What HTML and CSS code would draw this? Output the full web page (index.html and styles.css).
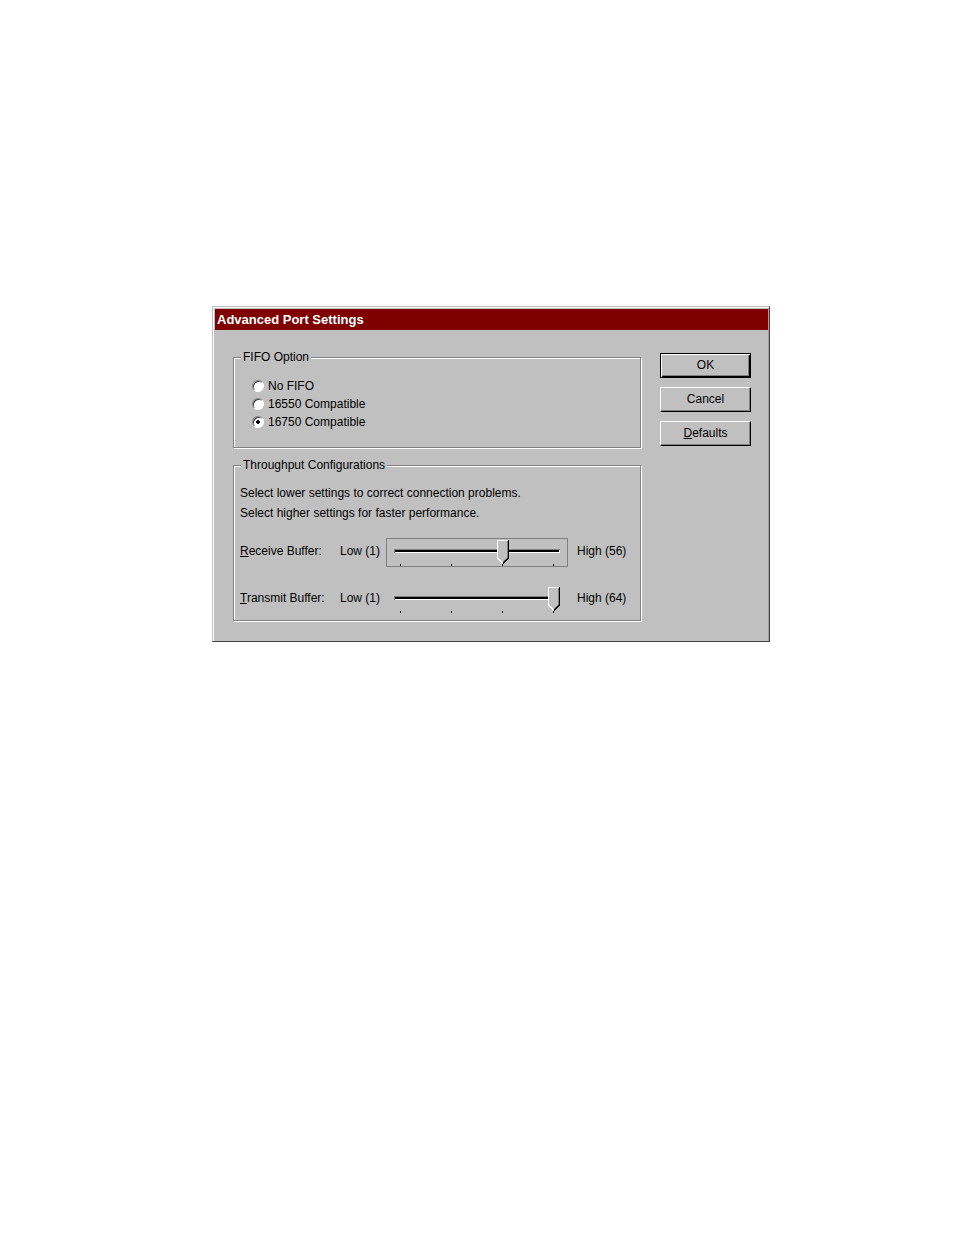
FILE: index.html
```html
<!DOCTYPE html>
<html lang="en">
<head>
  <meta charset="UTF-8">
  <meta name="viewport" content="width=device-width, initial-scale=1.0">
  <title>Advanced Port Settings</title>
  <link rel="stylesheet" href="styles.css">
</head>
<body>

  <form class="dialog" onsubmit="return false">
    <h1 class="title-bar">Advanced Port Settings</h1>

    <div class="dialog-body">
      <div class="settings">
        <fieldset class="fifo">
          <legend>FIFO Option</legend>
          <label class="option"><input type="radio" name="fifo"> No FIFO</label>
          <label class="option"><input type="radio" name="fifo"> 16550 Compatible</label>
          <label class="option"><input type="radio" name="fifo" checked> 16750 Compatible</label>
        </fieldset>

        <fieldset class="throughput">
          <legend>Throughput Configurations</legend>
          <p>Select lower settings to correct connection problems.</p>
          <p>Select higher settings for faster performance.</p>

          <div class="buffers">
            <label for="receive"><u>R</u>eceive Buffer:</label>
            <span>Low (1)</span>
            <div class="slider focused">
              <input type="range" id="receive" min="0" max="3" value="2" accesskey="r">
              <div class="ticks"><i></i><i></i><i></i><i></i></div>
            </div>
            <span class="high">High (56)</span>

            <label for="transmit"><u>T</u>ransmit Buffer:</label>
            <span>Low (1)</span>
            <div class="slider">
              <input type="range" id="transmit" min="0" max="3" value="3" accesskey="t">
              <div class="ticks"><i></i><i></i><i></i><i></i></div>
            </div>
            <span class="high">High (64)</span>
          </div>
        </fieldset>
      </div>

      <div class="buttons">
        <button type="submit" class="default">OK</button>
        <button type="button">Cancel</button>
        <button type="button" accesskey="d"><u>D</u>efaults</button>
      </div>
    </div>
  </form>

</body>
</html>
```

FILE: styles.css
```css
body {
  margin: 0;
  padding: 306px 184px 24px 212px;
  background-color: #fff;
  color: #000;
  font-family: "Liberation Sans", Arial, sans-serif;
  font-size: 12px;
}

.dialog {
  background-color: #c0c0c0;
  border: 1px solid;
  border-color: #c0c0c0 #404040 #404040 #c0c0c0;
  box-shadow: inset 1px 1px #fff, inset -1px 0 #a0a0a0;
  padding: 2px 1px 0 2px;
}

.title-bar {
  margin: 0;
  padding: 0 2px;
  background-color: #800000;
  color: #fff;
  font-size: 13px;
  line-height: 21px;
}

.dialog-body {
  display: flex;
  gap: 19px;
  padding: 20px 17px 20px 18px;
}

.settings {
  flex: 1;
  display: flex;
  flex-direction: column;
  gap: 10px;
}

fieldset {
  min-width: 0;
  margin: 0;
  border: 1px solid #808080;
  box-shadow: inset 1px 1px #fff, 1px 1px #fff;
}

legend {
  margin-left: 1px;
  padding: 0 2px;
  background-color: #c0c0c0;
  line-height: 14px;
}

/* FIFO Option */
.fifo {
  padding: 13px 6px 16px;
}

.option {
  display: flex;
  align-items: center;
  gap: 4px;
  margin-left: 12px;
  line-height: 18px;
}

.option input {
  appearance: none;
  width: 12px;
  height: 12px;
  margin: 0;
  border: 1px solid;
  border-color: #808080 #fff #fff #808080;
  border-radius: 50%;
  background-color: #fff;
  box-shadow: inset 1px 1px #404040;
}

.option input:checked {
  background-image: radial-gradient(circle, #000 2px, transparent 2px);
}

/* Throughput Configurations */
.throughput {
  padding: 11px 0 6px 6px;
}

.throughput p {
  margin: 0;
  line-height: 20px;
}

.buffers {
  display: grid;
  grid-template-columns: 100px 46px 1fr 72px;
  row-gap: 18px;
  margin-top: 15px;
  line-height: 26px;
}

.high {
  padding-left: 9px;
}

.slider {
  border: 1px solid transparent;
  padding: 1px 7px 0;
}

.slider.focused {
  border-color: #808080;
}

.slider input {
  appearance: none;
  display: block;
  width: 100%;
  height: 22px;
  margin: 0;
  background: none;
  outline: none;
}

.slider input::-webkit-slider-runnable-track {
  height: 4px;
  background-color: #000;
  box-shadow: inset 1px 1px #808080, inset -1px -1px #fff;
}

.slider input::-webkit-slider-thumb {
  appearance: none;
  width: 12px;
  height: 24px;
  margin-top: -9px;
  background: url("data:image/svg+xml,%3Csvg xmlns='http://www.w3.org/2000/svg' width='12' height='24' shape-rendering='crispEdges'%3E%3Cpath d='M0 0H12V18L6 24L0 18Z' fill='%23c0c0c0'/%3E%3Cpath d='M10.5 1V18L6 22.5' fill='none' stroke='%23808080'/%3E%3Cpath d='M11.5 0V18L6 23.5' fill='none' stroke='%23000'/%3E%3Cpath d='M11 .5H.5V18L6 23.5' fill='none' stroke='%23fff'/%3E%3C/svg%3E") no-repeat;
}

.ticks {
  display: flex;
  justify-content: space-between;
  margin: 2px 6px 0;
}

.ticks i {
  width: 1px;
  height: 2px;
  background-color: #000;
}

/* Buttons */
.buttons {
  display: flex;
  flex-direction: column;
  gap: 9px;
  width: 91px;
  padding-top: 3px;
}

button {
  height: 25px;
  padding: 0 0 2px;
  background-color: #c0c0c0;
  border: 1px solid;
  border-color: #fff #000 #000 #fff;
  border-radius: 0;
  box-shadow: inset -1px -1px #808080;
  color: #000;
  font: inherit;
}

button.default {
  border-color: #000;
  box-shadow: inset 1px 1px #fff, inset -1px -1px #000, inset -2px -2px #808080;
}
```
